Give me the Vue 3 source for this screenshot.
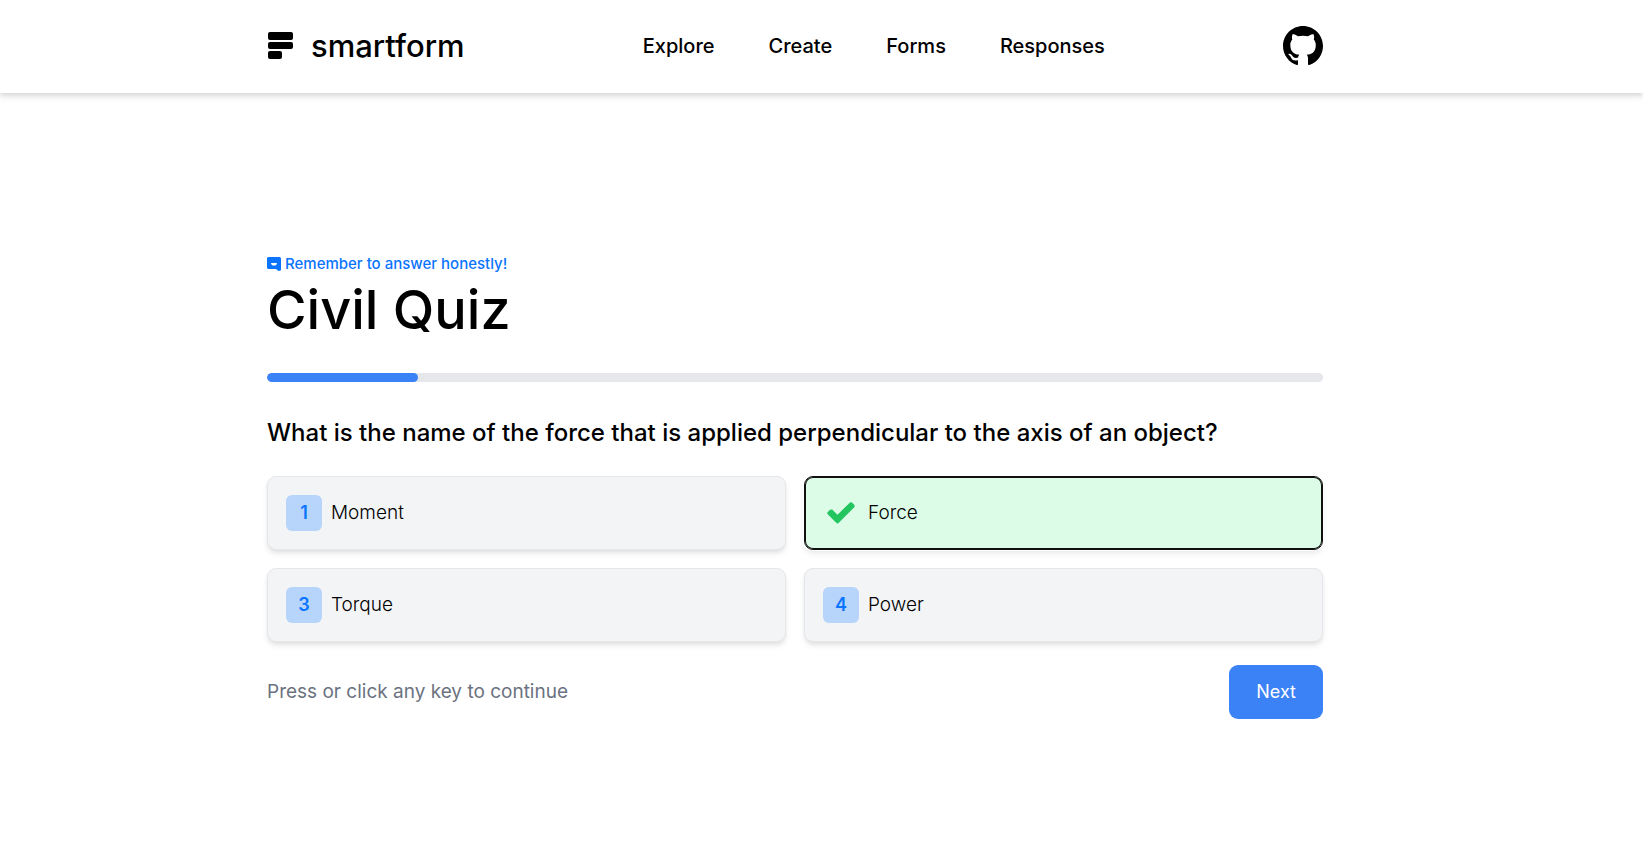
<script setup>
import { computed, ref } from 'vue'

const links = ['Explore', 'Create', 'Forms', 'Responses']
const answers = ['Moment', 'Force', 'Torque', 'Power']
const selected = ref(1)
const step = 1
const total = 7
const progress = computed(() => `${(step / total) * 100}%`)
</script>

<template>
  <div class="page">
    <header class="header">
      <div class="container bar">
        <a class="brand" href="#">
          <svg class="brand-mark" viewBox="0 0 26 28" aria-hidden="true">
            <rect x="1" y="0" width="25" height="8" rx="2" />
            <rect x="1" y="10" width="25" height="7" rx="2" />
            <rect x="1" y="19" width="14" height="8" rx="2" />
          </svg>
          <span>smartform</span>
        </a>
        <nav class="nav" aria-label="Main">
          <a v-for="link in links" :key="link" href="#">{{ link }}</a>
        </nav>
        <a class="github" href="#" aria-label="GitHub">
          <svg viewBox="0 0 16 16" aria-hidden="true">
            <path d="M8 0C3.58 0 0 3.58 0 8c0 3.54 2.29 6.53 5.47 7.59.4.07.55-.17.55-.38 0-.19-.01-.82-.01-1.49-2.01.37-2.53-.49-2.69-.94-.09-.23-.48-.94-.82-1.13-.28-.15-.68-.52-.01-.53.63-.01 1.08.58 1.23.82.72 1.21 1.87.87 2.33.66.07-.52.28-.87.51-1.07-1.78-.2-3.64-.89-3.64-3.95 0-.87.31-1.59.82-2.15-.08-.2-.36-1.02.08-2.12 0 0 .67-.21 2.2.82.64-.18 1.32-.27 2-.27s1.36.09 2 .27c1.53-1.04 2.2-.82 2.2-.82.44 1.1.16 1.92.08 2.12.51.56.82 1.27.82 2.15 0 3.07-1.87 3.75-3.65 3.95.29.25.54.73.54 1.48 0 1.07-.01 1.93-.01 2.2 0 .21.15.46.55.38A8.01 8.01 0 0 0 16 8c0-4.42-3.58-8-8-8z" />
          </svg>
        </a>
      </div>
    </header>

    <main class="main">
      <div class="container">
        <p class="reminder">
          <svg viewBox="0 0 14 14" aria-hidden="true">
            <path class="bubble" d="M1.5 0h11A1.5 1.5 0 0 1 14 1.5V13.2L11.5 14 9 12H1.5A1.5 1.5 0 0 1 0 10.5V1.5A1.5 1.5 0 0 1 1.5 0z" />
            <path class="smile" d="M4 6h6c0 1.6-1.3 2.6-3 2.6S4 7.6 4 6z" />
          </svg>
          <span>Remember to answer honestly!</span>
        </p>
        <h1>Civil Quiz</h1>
        <div
          class="track"
          role="progressbar"
          aria-label="Quiz progress"
          aria-valuemin="0"
          :aria-valuemax="total"
          :aria-valuenow="step"
        >
          <div class="fill" :style="{ width: progress }"></div>
        </div>
        <h2>What is the name of the force that is applied perpendicular to the axis of an object?</h2>
        <div class="answers">
          <button
            v-for="(answer, index) in answers"
            :key="answer"
            type="button"
            class="answer"
            :class="{ chosen: selected === index }"
            :aria-pressed="selected === index"
            @click="selected = index"
          >
            <span class="badge">
              <svg v-if="selected === index" viewBox="0 0 28 22" aria-hidden="true">
                <path d="M2 10.7L5.2 7.5 10.5 12.8 23 0.5Q24.5 0 25.5 1L27.5 3.2Q28 4 27.5 5L11.8 20.8Q10.5 22 9.2 20.8L0.5 12Q0 10.8 0.8 10L3 7.8Q4.2 7 5.5 7.9" />
              </svg>
              <template v-else>{{ index + 1 }}</template>
            </span>
            <span>{{ answer }}</span>
          </button>
        </div>
        <div class="footer">
          <p>Press or click any key to continue</p>
          <button type="button" class="next">Next</button>
        </div>
      </div>
    </main>
  </div>
</template>

<style>
body {
  margin: 0;
  background: #fff;
}
</style>

<style scoped>
.page,
.page * {
  box-sizing: border-box;
}
.page {
  min-height: 100vh;
  display: flex;
  flex-direction: column;
  color: #000;
  font-family: Inter, "Liberation Sans", sans-serif;
  font-size: 18px;
  line-height: 28px;
}
h1,
h2,
p {
  margin: 0;
}
a {
  color: inherit;
  text-decoration: none;
}
button {
  font: inherit;
  color: inherit;
  cursor: pointer;
}
.container {
  width: 100%;
  max-width: 1056px;
  margin: 0 auto;
}
.header {
  padding: 0 80px 0 27px;
  box-shadow: 0 4px 6px rgba(0, 0, 0, 0.1), 0 2px 4px rgba(0, 0, 0, 0.06);
}
.bar {
  display: flex;
  align-items: center;
  justify-content: space-between;
  padding: 26px 0 27px;
}
.brand {
  display: flex;
  align-items: center;
  gap: 18px;
  font-size: 31px;
  line-height: 36px;
  font-weight: 500;
}
.brand-mark {
  width: 26px;
  height: 28px;
}
.nav {
  display: flex;
  gap: 54px;
  font-size: 20px;
  font-weight: 500;
}
.github {
  width: 40px;
  height: 40px;
}
.github svg {
  display: block;
  width: 100%;
}
.main {
  flex: 1;
  display: flex;
  align-items: center;
  padding: 22px 80px 0 27px;
}
.reminder {
  display: flex;
  align-items: center;
  gap: 4px;
  color: #0a74ff;
  font-size: 15px;
  line-height: 20px;
  font-weight: 500;
}
.reminder svg {
  width: 14px;
  height: 14px;
}
.bubble {
  fill: #0a74ff;
}
.smile {
  fill: #fff;
}
h1 {
  font-size: 54px;
  line-height: 72px;
  font-weight: 500;
}
.track {
  height: 9px;
  margin-top: 27px;
  border-radius: 9px;
  background: #e5e7eb;
  overflow: hidden;
}
.fill {
  height: 100%;
  border-radius: 9px;
  background: #3b82f6;
}
h2 {
  margin-top: 35px;
  font-size: 24px;
  line-height: 32px;
  font-weight: 500;
}
.answers {
  display: grid;
  grid-template-columns: 1fr 1fr;
  gap: 18px;
  margin-top: 27px;
}
.answer {
  display: flex;
  align-items: center;
  gap: 9px;
  padding: 18px;
  border: 1px solid #e5e7eb;
  border-radius: 9px;
  background: #f3f4f6;
  text-align: left;
  font-size: 19px;
  font-weight: 300;
  box-shadow: 0 4px 6px -1px rgba(0, 0, 0, 0.1), 0 2px 4px -1px rgba(0, 0, 0, 0.06);
}
.chosen {
  border-color: #101010;
  background: #dcfce7;
  box-shadow: inset 0 0 0 1px #101010, 0 0 0 1px #fff, 0 4px 6px -1px rgba(0, 0, 0, 0.1);
}
.badge {
  display: grid;
  place-items: center;
  width: 36px;
  height: 36px;
  border-radius: 6px;
  background: #b7d5fa;
  color: #0a74ff;
  font-size: 18px;
  font-weight: 600;
}
.chosen .badge {
  background: none;
}
.badge svg {
  width: 28px;
  height: 22px;
  fill: #22c55e;
}
.footer {
  display: flex;
  align-items: center;
  justify-content: space-between;
  margin-top: 23px;
  color: #6b7280;
  font-size: 19px;
}
.next {
  padding: 13px 27px;
  border: 0;
  border-radius: 9px;
  background: #3b82f6;
  color: #fff;
  font-size: 18px;
}
</style>
